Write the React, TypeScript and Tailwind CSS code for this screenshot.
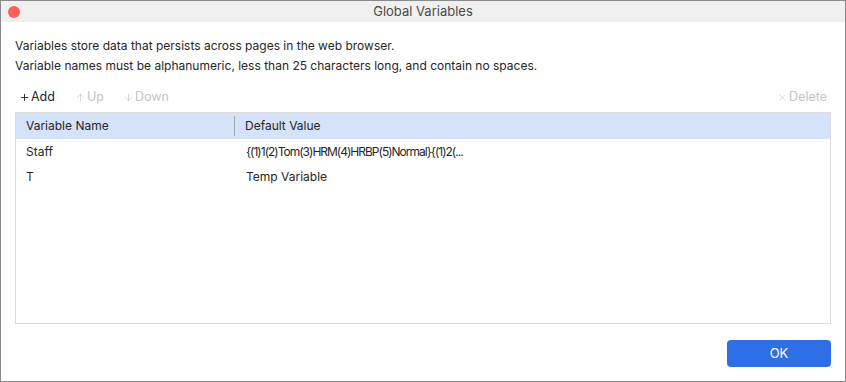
import { Plus, ArrowUp, ArrowDown, X } from "lucide-react";

const rows = [
  { name: "Staff", value: "{(1)1(2)Tom(3)HRM(4)HRBP(5)Normal}{(1)2(...", tight: true },
  { name: "T", value: "Temp Variable", tight: false },
];

// Global variables dialog: title bar, description, toolbar, table and OK.
export default function App() {
  return (
    <div className="flex h-[382px] w-[846px] flex-col overflow-hidden border border-[#8a8a8a] bg-white font-['Inter',sans-serif] text-[12px] text-[#262626]">
      <div className="relative flex h-[21px] shrink-0 items-center justify-center bg-[#f0f0f0]">
        <span className="absolute left-[7px] top-[5px] h-[12px] w-[12px] rounded-full bg-[#fe5f57]" />
        <span className="text-[13px] text-[#4a4a4a]">Global Variables</span>
      </div>

      <div className="flex flex-1 flex-col px-[14px] pt-[14px] pb-[14px]">
        <p className="leading-[20px]">Variables store data that persists across pages in the web browser.</p>
        <p className="leading-[20px]">Variable names must be alphanumeric, less than 25 characters long, and contain no spaces.</p>

        <div className="mt-[11px] flex h-[20px] items-center text-[12.5px]">
          <button className="flex items-center gap-[1px] px-[4px] text-[#262626]">
            <Plus className="h-[11px] w-[11px]" strokeWidth={2} />
            Add
          </button>
          <button className="ml-[12px] flex items-center gap-[1px] px-[4px] text-[#c4c4c4]">
            <ArrowUp className="h-[11px] w-[11px]" strokeWidth={1.5} />
            Up
          </button>
          <button className="ml-[11px] flex items-center gap-[1px] px-[4px] text-[#c4c4c4]">
            <ArrowDown className="h-[11px] w-[11px]" strokeWidth={1.5} />
            Down
          </button>
          <button className="ml-auto flex items-center gap-[1px] px-[4px] text-[#c4c4c4]">
            <X className="h-[11px] w-[11px]" strokeWidth={1.5} />
            Delete
          </button>
        </div>

        <div className="mt-[5px] flex h-[212px] flex-col border border-[#dcdcdc]">
          <div className="flex h-[26px] shrink-0 items-center bg-[#d4e2fa]">
            <div className="w-[219px] border-r border-[#a9a9a9] px-[10px] leading-[20px]">Variable Name</div>
            <div className="px-[10px]">Default Value</div>
          </div>
          {rows.map((r) => (
            <div key={r.name} className="flex h-[25px] shrink-0 items-center">
              <div className="w-[220px] px-[10px]">{r.name}</div>
              <div className={r.tight ? "px-[10px] tracking-[-1px]" : "px-[10px]"}>{r.value}</div>
            </div>
          ))}
        </div>

        <div className="mt-auto flex justify-end">
          <button className="h-[27px] w-[104px] rounded-[4px] bg-[#2e6fe8] text-[13px] text-white">OK</button>
        </div>
      </div>
    </div>
  );
}
